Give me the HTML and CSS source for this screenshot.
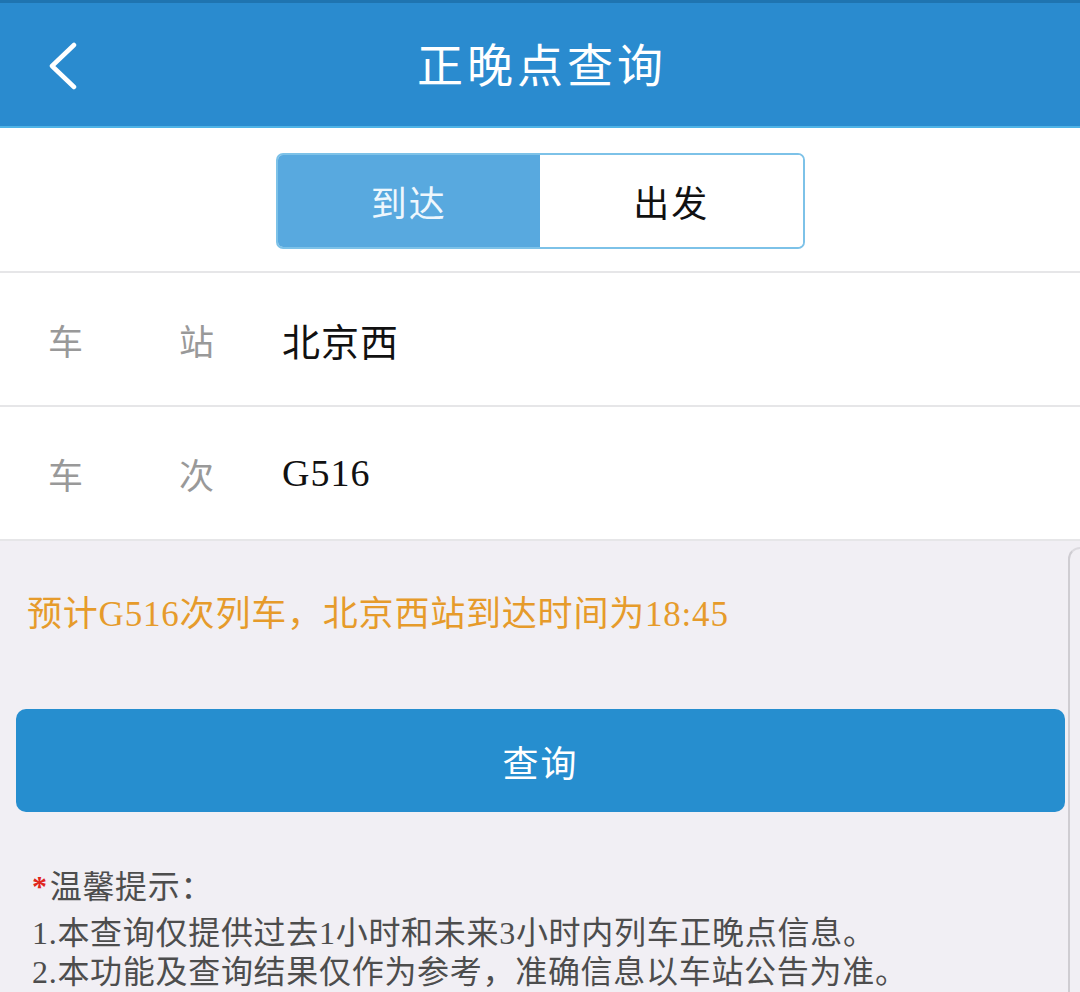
FILE: index.html
```html
<!DOCTYPE html>
<html lang="zh-CN">
<head>
<meta charset="utf-8">
<title>正晚点查询</title>
<link rel="stylesheet" href="styles.css">
</head>
<body>
<div class="page">
  <header class="topbar">
    <div class="back">
      <svg width="34" height="48" viewBox="0 0 34 48"><polyline points="27,3 5,24 27,45" fill="none" stroke="#ffffff" stroke-width="4.5" stroke-linecap="round" stroke-linejoin="round"/></svg>
    </div>
    <h1 class="title">正晚点查询</h1>
    <div></div>
  </header>

  <section class="switch-wrap">
    <div class="segment">
      <div class="seg seg-active">到达</div>
      <div class="seg">出发</div>
    </div>
  </section>

  <section class="form">
    <div class="row">
      <div class="label"><span>车</span><span>站</span></div>
      <div class="value">北京西</div>
    </div>
    <div class="row">
      <div class="label"><span>车</span><span>次</span></div>
      <div class="value">G516</div>
    </div>
  </section>

  <section class="lower">
    <div class="lower-main">
      <p class="result">预计G516次列车，北京西站到达时间为18:45</p>
      <button class="query">查询</button>
      <div class="tips">
        <p class="tips-title"><span class="star">*</span>温馨提示：</p>
        <p class="tips-line first">1.本查询仅提供过去1小时和未来3小时内列车正晚点信息。</p>
        <p class="tips-line">2.本功能及查询结果仅作为参考，准确信息以车站公告为准。</p>
      </div>
    </div>
    <div class="edge"></div>
  </section>
</div>
</body>
</html>
```

FILE: styles.css
```css
html, body {
  margin: 0;
  padding: 0;
}
body {
  width: 1080px;
  height: 992px;
  overflow: hidden;
  background: #f1eff4;
  font-family: "Noto Sans CJK SC", "Noto Sans", sans-serif;
}
.page {
  display: flex;
  flex-direction: column;
  height: 992px;
}
.topbar {
  flex-shrink: 0;
  background: #2a8bcf;
  border-top: 3px solid #1f74b0;
  border-bottom: 2px solid #4fb3e6;
  box-sizing: border-box;
  height: 128px;
  display: grid;
  grid-template-columns: 1fr auto 1fr;
  align-items: center;
}
.back {
  padding-left: 47px;
  display: flex;
  align-items: center;
  padding-top: 2px;
}
.title {
  margin: 0;
  color: #ffffff;
  font-size: 46px;
  font-weight: 400;
  letter-spacing: 4px;
  line-height: 1;
  margin-bottom: 6px;
  padding-left: 4px;
}
.switch-wrap {
  flex-shrink: 0;
  background: #ffffff;
  padding: 25px 0 22px;
  display: flex;
  justify-content: center;
}
.segment {
  width: 529px;
  height: 96px;
  box-sizing: border-box;
  border: 2px solid #7dc2e8;
  border-radius: 7px;
  display: flex;
  overflow: hidden;
}
.seg {
  flex: 1;
  display: flex;
  align-items: center;
  justify-content: center;
  font-size: 36px;
  color: #111111;
  background: #ffffff;
  letter-spacing: 2px;
}
.seg-active {
  background: #58a9df;
  color: #eef7fd;
}
.form {
  flex-shrink: 0;
  background: #ffffff;
  border-top: 2px solid #e6e6e8;
}
.row {
  height: 132px;
  display: flex;
  align-items: center;
  border-bottom: 2px solid #e6e6e8;
}
.label {
  width: 166px;
  margin-left: 48px;
  margin-right: 68px;
  display: flex;
  justify-content: space-between;
  color: #999999;
  font-size: 35px;
}
.value {
  font-family: "Liberation Serif", "Noto Sans CJK SC", serif;
  font-size: 38px;
  color: #111111;
  letter-spacing: 1px;
}
.lower {
  flex: 1 0 auto;
  display: flex;
}
.lower-main {
  width: 1068px;
}
.edge {
  flex: 1;
  margin-top: 6px;
  border-left: 2px solid #cfcdd2;
  border-top: 2px solid #dcdadf;
  border-top-left-radius: 14px;
}
.result {
  margin: 50px 0 0 27px;
  font-family: "Liberation Serif", "Noto Sans CJK SC", serif;
  font-size: 35px;
  letter-spacing: 0.8px;
  line-height: 48px;
  color: #e69b2b;
}
.query {
  display: block;
  width: 1049px;
  height: 103px;
  margin: 70px 0 0 16px;
  border: none;
  border-radius: 10px;
  background: #268ecf;
  color: #ffffff;
  font-family: inherit;
  font-size: 36px;
  letter-spacing: 2px;
  padding: 0;
}
.tips {
  margin: 55px 0 0 32px;
  color: #4d4d4d;
  font-family: "Liberation Serif", "Noto Sans CJK SC", serif;
  font-size: 32px;
  letter-spacing: 0.7px;
}
.tips p {
  margin: 0;
}
.tips-title {
  line-height: 38px;
}
.star {
  color: #e0261c;
  font-size: 30px;
  font-weight: 700;
  vertical-align: 2px;
  margin-right: 2px;
}
.tips-line {
  line-height: 39px;
}
.tips-line.first {
  margin-top: 8px;
}
```
